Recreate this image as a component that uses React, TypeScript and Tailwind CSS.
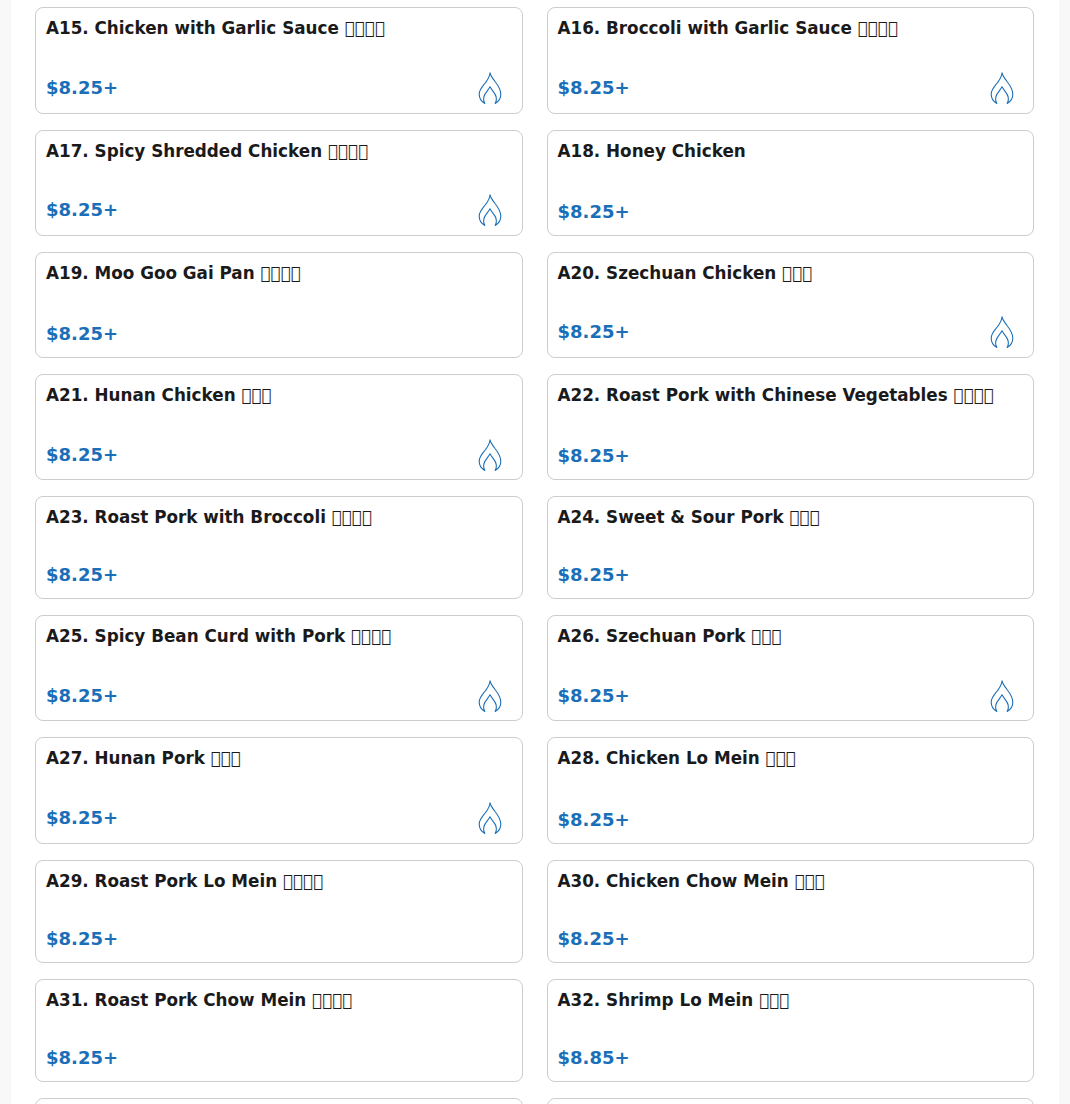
const F4 = "\uE000\uE000\uE000\uE000";
const F3 = "\uE000\uE000\uE000";
const items: [string, string, string, boolean][][] = [
  [["A15. Chicken with Garlic Sauce", F4, "$8.25+", true], ["A16. Broccoli with Garlic Sauce", F4, "$8.25+", true]],
  [["A17. Spicy Shredded Chicken", F4, "$8.25+", true], ["A18. Honey Chicken", "", "$8.25+", false]],
  [["A19. Moo Goo Gai Pan", F4, "$8.25+", false], ["A20. Szechuan Chicken", F3, "$8.25+", true]],
  [["A21. Hunan Chicken", F3, "$8.25+", true], ["A22. Roast Pork with Chinese Vegetables", F4, "$8.25+", false]],
  [["A23. Roast Pork with Broccoli", F4, "$8.25+", false], ["A24. Sweet & Sour Pork", F3, "$8.25+", false]],
  [["A25. Spicy Bean Curd with Pork", F4, "$8.25+", true], ["A26. Szechuan Pork", F3, "$8.25+", true]],
  [["A27. Hunan Pork", F3, "$8.25+", true], ["A28. Chicken Lo Mein", F3, "$8.25+", false]],
  [["A29. Roast Pork Lo Mein", F4, "$8.25+", false], ["A30. Chicken Chow Mein", F3, "$8.25+", false]],
  [["A31. Roast Pork Chow Mein", F4, "$8.25+", false], ["A32. Shrimp Lo Mein", F3, "$8.85+", false]],
  [["", "", "", false], ["", "", "", false]],
];

function Flame() {
  return (
    <svg width="24" height="32" viewBox="0 0 24 32" fill="none" stroke="#1a6fb8" strokeWidth="1.1" strokeLinejoin="round" strokeLinecap="round">
      <path d="M12 .8C12.4 4 14.400 5.800 17 9.500C20.400 13.800 22.800 18 22.800 22C22.800 26 20.800 29.500 17.200 31.400C18.400 29.400 18.600 27 18 24.500C17 20.500 13.800 18.500 12 14.800C10.200 18.500 7 20.500 6 24.500C5.400 27 5.600 29.400 6.800 31.400C3.200 29.500 1.200 26 1.200 22C1.200 17.500 4.500 14.300 7.200 11C9.500 8 11.700 5.500 12 .8Z" />
    </svg>
  );
}

function Card({ title, zh, price, hot }: { title: string; zh: string; price: string; hot: boolean }) {
  return (
    <div className="flex flex-col rounded-[8px] border border-[#cccccc] bg-white px-[10px] pt-[9px] pb-[9px]">
      <h3 className="mb-[33px] text-[16.8px] leading-[22px] font-bold text-[#1a1a1a]">
        {title}
        {zh ? " " + zh : ""}
      </h3>
      <div className={hot ? "mt-auto flex h-[31.2px] items-center justify-between" : "mt-auto flex h-[28px] items-center justify-between"}>
        <span className="text-[18px] leading-[28px] font-bold text-[#1a6fb8]">{price}</span>
        {hot && (
          <span className="mr-[9.5px] flex">
            <Flame />
          </span>
        )}
      </div>
    </div>
  );
}

export default function App() {
  return (
    <div className="h-[1104px] overflow-hidden bg-[#f8f8f8] font-['DejaVu_Sans','Liberation_Sans',sans-serif]">
      <div className="mx-[11px] flex h-full flex-col gap-[16px] bg-white pt-[7.4px] pr-[25px] pl-[24px]">
        {items.map((row, i) => (
          <div key={i} className="grid shrink-0 grid-cols-2 gap-[24px]">
            {row.map((c, j) => (
              <Card key={j} title={c[0]} zh={c[1]} price={c[2]} hot={c[3]} />
            ))}
          </div>
        ))}
      </div>
    </div>
  );
}
